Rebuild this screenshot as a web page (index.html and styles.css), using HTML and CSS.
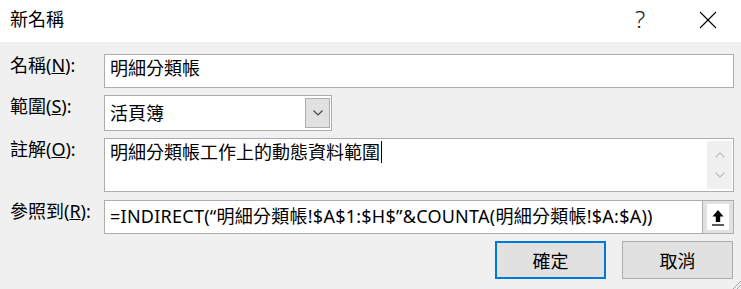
FILE: index.html
```html
<!DOCTYPE html>
<html lang="zh-Hant">

<head>
    <meta charset="UTF-8">
    <meta name="viewport" content="width=device-width, initial-scale=1.0">
    <title>新名稱</title>
    <link rel="stylesheet" href="styles.css">
</head>

<body>
    <div class="dialog">
        <div class="titlebar">
            <div class="title">新名稱</div>
            <div class="title-help">?</div>
            <div class="title-close">
                <svg width="18" height="18" viewBox="0 0 18 18">
                    <path d="M1 1 L17 17 M17 1 L1 17" stroke="#000" stroke-width="1.1" fill="none" />
                </svg>
            </div>
        </div>

        <div class="content">
            <!-- 名稱 -->
            <div class="row">
                <div class="label">名稱(<u>N</u>):</div>
                <div class="field field-name">明細分類帳</div>
            </div>

            <!-- 範圍 -->
            <div class="row">
                <div class="label">範圍(<u>S</u>):</div>
                <div class="field field-scope">
                    <span class="scope-text">活頁簿</span>
                    <span class="drop-btn">
                        <svg width="12" height="8" viewBox="0 0 12 8">
                            <path d="M1.5 1.5 L6 6 L10.5 1.5" stroke="#444" stroke-width="1.2" fill="none" />
                        </svg>
                    </span>
                </div>
            </div>

            <!-- 註解 -->
            <div class="row">
                <div class="label">註解(<u>O</u>):</div>
                <div class="field field-comment">
                    <span class="comment-text">明細分類帳工作上的動態資料範圍<span class="caret"></span></span>
                    <span class="scrollbar">
                        <svg width="12" height="8" viewBox="0 0 12 8">
                            <path d="M1.5 6.5 L6 2 L10.5 6.5" stroke="#c2c2c2" stroke-width="1.4" fill="none" />
                        </svg>
                        <svg width="12" height="8" viewBox="0 0 12 8">
                            <path d="M1.5 1.5 L6 6 L10.5 1.5" stroke="#c2c2c2" stroke-width="1.4" fill="none" />
                        </svg>
                    </span>
                </div>
            </div>

            <!-- 參照到 -->
            <div class="row row-refers">
                <div class="label">參照到(<u>R</u>):</div>
                <div class="field field-refers">=INDIRECT(“明細分類帳!$A$1:$H$”&amp;COUNTA(明細分類帳!$A:$A))</div>
                <div class="collapse-btn">
                    <span class="collapse-inner">
                        <svg width="14" height="20" viewBox="0 0 14 20">
                            <path d="M7 3 L12.5 9.5 L9.2 9.5 L9.2 15 L4.8 15 L4.8 9.5 L1.5 9.5 Z" fill="#000" />
                            <path d="M1 18 L13 18" stroke="#000" stroke-width="1.3" />
                        </svg>
                    </span>
                </div>
            </div>

            <div class="buttons">
                <div class="btn btn-default">確定</div>
                <div class="btn">取消</div>
            </div>
        </div>

        <div class="grip">
            <svg width="9" height="9" viewBox="0 0 9 9">
                <path d="M9 1 L1 9 M9 5 L5 9" stroke="#a0a0a0" stroke-width="1" />
            </svg>
        </div>
    </div>
</body>

</html>
```

FILE: styles.css
```css
body {
    margin: 0;
    padding: 0;
    font-family: "Noto Sans", "Noto Sans CJK TC", sans-serif;
    font-size: 18px;
    color: #000;
}

.dialog {
    position: relative;
    width: 741px;
    height: 289px;
    background-color: #f0f0f0;
    overflow: hidden;
}

.titlebar {
    height: 42px;
    background-color: #fff;
    display: flex;
    align-items: center;
    padding-left: 10px;
}

.title {
    flex: 1;
    line-height: 24px;
    margin-top: -4px;
}

.title-help {
    width: 20px;
    margin-right: 44px;
    margin-top: -4px;
    font-size: 24px;
    line-height: 26px;
    font-weight: 300;
    color: #222;
}

.title-close {
    width: 18px;
    height: 18px;
    margin-right: 24px;
    margin-top: -4px;
}

.content {
    padding: 12px 7px 0 10px;
    display: flex;
    flex-direction: column;
    gap: 7px;
}

.row {
    display: flex;
    align-items: flex-start;
}

.label {
    width: 94px;
    flex: none;
    line-height: 23px;
}

.field {
    box-sizing: border-box;
    border: 1px solid #adadad;
    background-color: #fff;
    line-height: 22px;
    padding: 3px 5px 0 5px;
    white-space: nowrap;
}

.field-name {
    flex: 1;
    height: 34px;
    padding-top: 2px;
}

.field-scope {
    width: 228px;
    height: 36px;
    display: flex;
    align-items: flex-start;
    padding: 2px 1px 2px 5px;
}

.scope-text {
    flex: 1;
    padding-top: 4px;
}

.drop-btn {
    width: 25px;
    height: 30px;
    box-sizing: border-box;
    border: 1px solid #adadad;
    background-color: #e1e1e1;
    display: flex;
    align-items: center;
    justify-content: center;
}

.field-comment {
    flex: 1;
    height: 54px;
    display: flex;
    padding: 2px 1px 2px 5px;
}

.comment-text {
    flex: 1;
    padding-top: 0;
}

.caret {
    display: inline-block;
    width: 1px;
    height: 22px;
    background-color: #000;
    vertical-align: top;
    margin-left: 1px;
}

.scrollbar {
    width: 25px;
    background-color: #f0f0f0;
    display: flex;
    flex-direction: column;
    align-items: center;
    justify-content: space-around;
    padding: 4px 0;
    box-sizing: border-box;
}

.row-refers {
    margin-top: 1px;
}

.field-refers {
    flex: 1;
    height: 34px;
    padding-top: 4px;
    border-right: none;
    letter-spacing: 0.25px;
}

.collapse-btn {
    width: 32px;
    height: 34px;
    box-sizing: border-box;
    border: 1px solid #adadad;
    background-color: #e1e1e1;
    padding: 3px 4px;
    display: flex;
}

.collapse-inner {
    flex: 1;
    background-color: #fff;
    display: flex;
    align-items: center;
    justify-content: center;
}

.buttons {
    display: flex;
    justify-content: flex-end;
    gap: 16px;
    padding-right: 1px;
}

.btn {
    width: 111px;
    height: 38px;
    box-sizing: border-box;
    border: 1px solid #adadad;
    background-color: #e1e1e1;
    display: flex;
    align-items: center;
    justify-content: center;
}

.btn-default {
    border: 2px solid #0078d7;
}

.grip {
    position: absolute;
    right: 0;
    bottom: 0;
    width: 9px;
    height: 9px;
    line-height: 0;
}
```
